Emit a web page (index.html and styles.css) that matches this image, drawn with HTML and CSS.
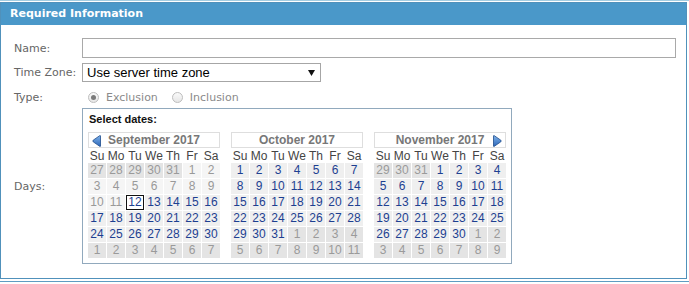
FILE: index.html
```html
<!DOCTYPE html>
<html>
<head>
    <title>Required Information</title>
    <link rel="stylesheet" href="styles.css">
</head>
<body>
    <div class="page">
        <div class="panel">
            <div class="panel-head">Required Information</div>
            <div class="panel-body">
                <div class="form-row row-name">
                    <label class="lbl">Name:</label>
                    <input type="text" class="txt">
                </div>
                <div class="form-row row-tz">
                    <label class="lbl">Time Zone:</label>
                    <div class="select">
                        <span>Use server time zone</span>
                        <svg width="7" height="6" viewBox="0 0 7 6"><path d="M0 0 L7 0 L3.5 6 Z" fill="#111"/></svg>
                    </div>
                </div>
                <div class="form-row row-type">
                    <label class="lbl">Type:</label>
                    <div class="radios">
                        <span class="radio checked"></span><span class="radio-text">Exclusion</span>
                        <span class="radio"></span><span class="radio-text">Inclusion</span>
                    </div>
                </div>
                <div class="form-row row-days">
                    <label class="lbl">Days:</label>
                    <div class="calendar">
                        <div class="cal-caption">Select dates:</div>
                        <div class="months" id="months"></div>
                    </div>
                </div>
            </div>
        </div>
        <div class="page-end"></div>
    </div>

    <script>
        const MONTH_NAMES = ['January', 'February', 'March', 'April', 'May', 'June', 'July',
            'August', 'September', 'October', 'November', 'December'];
        const DOW = ['Su', 'Mo', 'Tu', 'We', 'Th', 'Fr', 'Sa'];
        const today = new Date(2017, 8, 12);
        const monthsEl = document.getElementById('months');

        const arrowLeft = '<svg class="nav nav-prev" width="9" height="12" viewBox="0 0 9 12"><defs><linearGradient id="ga" x1="0" y1="0" x2="0" y2="1"><stop offset="0" stop-color="#7fb3ea"/><stop offset="1" stop-color="#2c66b8"/></linearGradient></defs><path d="M8.5 1 L8.5 11 Q8.5 11.8 7.7 11.3 L1.2 6.8 Q0.3 6 1.2 5.2 L7.7 0.7 Q8.5 0.2 8.5 1 Z" fill="url(#ga)" stroke="#1d4a8a" stroke-width="0.8"/></svg>';
        const arrowRight = '<svg class="nav nav-next" width="9" height="12" viewBox="0 0 9 12"><defs><linearGradient id="gb" x1="0" y1="0" x2="0" y2="1"><stop offset="0" stop-color="#7fb3ea"/><stop offset="1" stop-color="#2c66b8"/></linearGradient></defs><path d="M0.5 1 L0.5 11 Q0.5 11.8 1.3 11.3 L7.8 6.8 Q8.7 6 7.8 5.2 L1.3 0.7 Q0.5 0.2 0.5 1 Z" fill="url(#gb)" stroke="#1d4a8a" stroke-width="0.8"/></svg>';

        function buildMonth(year, month, idx) {
            let html = '<div class="month"><div class="month-title">';
            if (idx === 0) html += arrowLeft;
            html += MONTH_NAMES[month] + ' ' + year;
            if (idx === 2) html += arrowRight;
            html += '</div><div class="dow">';
            DOW.forEach(d => { html += '<span>' + d + '</span>'; });
            html += '</div><div class="days">';

            const first = new Date(year, month, 1);
            const start = new Date(year, month, 1 - first.getDay());
            for (let i = 0; i < 42; i++) {
                const d = new Date(start.getFullYear(), start.getMonth(), start.getDate() + i);
                let cls = 'day';
                if (d.getMonth() !== month) cls += ' other';
                else if (d < today) cls += ' past';
                if (d.getTime() === today.getTime()) cls += ' today';
                html += '<span class="' + cls + '">' + d.getDate() + '</span>';
            }
            html += '</div></div>';
            return html;
        }

        monthsEl.innerHTML = buildMonth(2017, 8, 0) + buildMonth(2017, 9, 1) + buildMonth(2017, 10, 2);
    </script>
</body>
</html>
```

FILE: styles.css
```css
body {
    margin: 0;
    font-family: "DejaVu Sans", Verdana, sans-serif;
    font-size: 11px;
    background: #fff;
}
.page {
    border-top: 1px solid #a4cde2;
    padding-top: 1px;
}
.panel {
    border: 1px solid #5091bb;
    margin-right: 2px;
}
.page-end {
    margin-top: 2px;
    border-top: 1px solid #5f9cc2;
}
.panel-head {
    height: 22px;
    line-height: 22px;
    background-color: #4a98c9;
    color: #fff;
    font-weight: bold;
    padding-left: 9px;
}
.panel-body {
    padding: 13px 10px 14px 13px;
}
.form-row {
    display: flex;
    align-items: center;
}
.lbl {
    width: 68px;
    flex: none;
    color: #666;
}
.row-tz {
    margin-top: 5px;
}
.row-type {
    margin-top: 6px;
    height: 19px;
}
.row-days {
    margin-top: 1px;
}
.txt {
    flex: 1;
    height: 20px;
    box-sizing: border-box;
    border: 1px solid #a9a9a9;
    margin: 0;
    padding: 0 4px;
}
.select {
    width: 239px;
    height: 19px;
    box-sizing: border-box;
    border: 1px solid #a6a6a6;
    display: flex;
    align-items: center;
    justify-content: space-between;
    padding: 0 5px 0 4px;
    font-family: "Liberation Sans", Arial, sans-serif;
    font-size: 13px;
    color: #000;
}
.radios {
    display: flex;
    align-items: center;
    padding-left: 6px;
    color: #8a8a8a;
}
.radio {
    width: 11px;
    height: 11px;
    box-sizing: border-box;
    border: 1px solid #bdbdbd;
    border-radius: 50%;
    background: linear-gradient(#fafafa, #e6e6e6);
    display: flex;
    align-items: center;
    justify-content: center;
}
.radio.checked::after {
    content: "";
    width: 5px;
    height: 5px;
    border-radius: 50%;
    background: #7a7a7a;
}
.radio-text {
    margin-left: 7px;
    margin-right: 14px;
}
.calendar {
    border: 1px solid #91a9bd;
    padding: 3px 5px 5px 5px;
    font-family: "Liberation Sans", Arial, sans-serif;
}
.cal-caption {
    font-weight: bold;
    font-size: 11px;
    color: #111;
    line-height: 14px;
    padding-left: 1px;
    margin-bottom: 6px;
}
.months {
    display: flex;
    gap: 11px;
}
.month {
    width: 132px;
}
.month-title {
    position: relative;
    height: 16px;
    box-sizing: border-box;
    border: 1px solid #dedede;
    background: #fff;
    text-align: center;
    font-weight: bold;
    font-size: 12px;
    line-height: 14px;
    color: #777;
}
.nav {
    position: absolute;
    top: 2px;
}
.nav-prev {
    left: 3px;
}
.nav-next {
    right: 3px;
}
.dow {
    display: grid;
    grid-template-columns: repeat(7, 18px);
    column-gap: 1px;
    margin-top: 1px;
    height: 14px;
    line-height: 14px;
    font-size: 12px;
    color: #444;
    text-align: center;
}
.days {
    display: grid;
    grid-template-columns: repeat(7, 18px);
    grid-auto-rows: 15px;
    gap: 1px;
}
.day {
    background: #efefef;
    color: #1d3f91;
    font-size: 12px;
    line-height: 15px;
    text-align: center;
}
.day.past {
    background: #f5f5f5;
    color: #999;
}
.day.other {
    background: #e4e4e4;
    color: #9a9a9a;
}
.day.today {
    background: #fff;
    box-shadow: inset 0 0 0 1px #111;
}
```
